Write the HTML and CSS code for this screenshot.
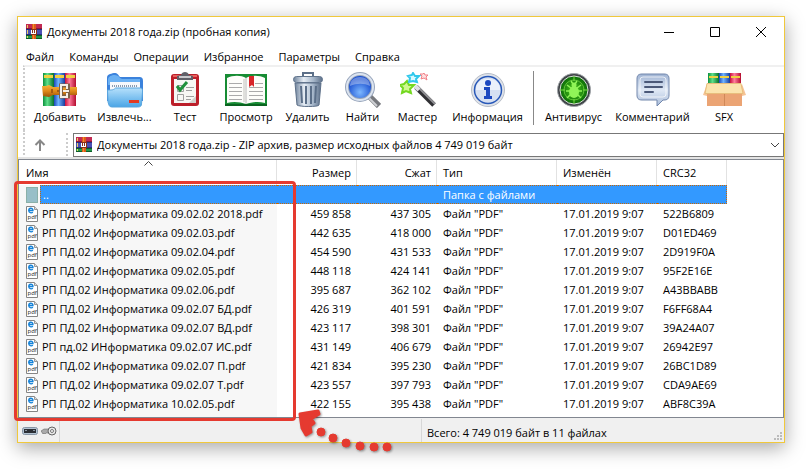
FILE: index.html
```
<!DOCTYPE html>
<html lang="ru">
<head>
  <meta charset="UTF-8">
  <meta name="viewport" content="width=device-width, initial-scale=1.0">
  <title>Документы 2018 года.zip (пробная копия)</title>
  <link rel="stylesheet" href="styles.css">
</head>
<body>

  <!-- shared icons -->
  <svg class="sprite" aria-hidden="true">
    <defs>
      <linearGradient id="g-green" x2="1" y2="0"><stop offset="0" stop-color="#0b8f3c"/><stop offset=".4" stop-color="#5fe08a"/><stop offset="1" stop-color="#08702c"/></linearGradient>
      <linearGradient id="g-blue" x2="1" y2="0"><stop offset="0" stop-color="#1c47b8"/><stop offset=".4" stop-color="#6fb4ff"/><stop offset="1" stop-color="#173c9c"/></linearGradient>
      <linearGradient id="g-red" x2="1" y2="0"><stop offset="0" stop-color="#c8103c"/><stop offset=".4" stop-color="#ff7d9d"/><stop offset="1" stop-color="#b30b2e"/></linearGradient>
      <linearGradient id="g-belt" x2="0" y2="1"><stop offset="0" stop-color="#f6b53c"/><stop offset=".5" stop-color="#e08a1a"/><stop offset="1" stop-color="#9c5208"/></linearGradient>
      <linearGradient id="g-folder" x2="0" y2="1"><stop offset="0" stop-color="#b6e0fb"/><stop offset="1" stop-color="#4aa5e6"/></linearGradient>
      <linearGradient id="g-steel" x2="1" y2="0"><stop offset="0" stop-color="#6f839c"/><stop offset=".35" stop-color="#e6edf5"/><stop offset=".7" stop-color="#a3b4c8"/><stop offset="1" stop-color="#5d7089"/></linearGradient>
      <linearGradient id="g-bubble" x2="0" y2="1"><stop offset="0" stop-color="#9fb3d3"/><stop offset=".5" stop-color="#dfe8f5"/><stop offset="1" stop-color="#a9bcd9"/></linearGradient>
      <radialGradient id="g-lens" cx=".5" cy=".7"><stop offset="0" stop-color="#7db8ff"/><stop offset="1" stop-color="#1a4fd0"/></radialGradient>
      <radialGradient id="g-virus"><stop offset="0" stop-color="#4ecb1c"/><stop offset="1" stop-color="#0a6a08"/></radialGradient>
    </defs>

    <symbol id="winrar" viewBox="0 0 16 16">
      <path fill="#c22a52" d="M0 0h16v5H0z"/><path fill="#8d1538" d="M0 4h16v1H0z"/>
      <path fill="#4a50b4" d="M0 5h16v6H0z"/><path fill="#282c80" d="M0 5h16v1H0zM0 10h16v1H0z"/>
      <path fill="#24964a" d="M0 11h16v4H0z"/><path fill="#0d5c28" d="M0 11h16v1H0zM0 14h16v1H0z"/>
      <path fill="#e8d060" d="M1 1h1v3H1zM1 6h1v4H1zM1 12h1v2H1z"/>
      <path fill="#dc5c18" d="M6 0h4v15H6z"/><path fill="#f28a30" d="M7 0h1v15H7z"/>
      <path fill="#883018" d="M5 5h6v6H5z"/>
      <path fill="#fff" d="M5 6h1v3h1V6h1v3h1V6h1v4H5z"/>
    </symbol>
  </svg>

  <svg class="hidden" aria-hidden="true">
    <symbol id="pdf" viewBox="0 0 12 16">
      <path fill="#fff" stroke="#858585" d="M.5.5h8l3 3v12H.5z"/>
      <path fill="#ddd" stroke="#999" d="M8.500.5v3h3"/>
      <path fill="none" stroke="#1482d8" stroke-width="1.300" d="M3 4.500h4C7 1.500 2.700 1.500 2.700 4.600c0 2.400 2.800 2.700 4.200 1.600"/>
      <text x="1.500" y="13" class="pdf-tag">pdf</text>
    </symbol>
  </svg>

  <main class="window">

    <header class="titlebar">
      <svg class="small-icon"><use href="#winrar"/></svg>
      <h1>Документы 2018 года.zip (пробная копия)</h1>
      <button class="win-btn" aria-label="Свернуть"><svg width="10" height="10"><path d="M0 5.500h10"/></svg></button>
      <button class="win-btn" aria-label="Развернуть"><svg width="10" height="10"><path d="M.5.5h9v9h-9z"/></svg></button>
      <button class="win-btn" aria-label="Закрыть"><svg width="10" height="10"><path d="M0 0l10 10M10 0L0 10"/></svg></button>
    </header>

    <nav class="menu">
      <button>Файл</button>
      <button>Команды</button>
      <button>Операции</button>
      <button>Избранное</button>
      <button>Параметры</button>
      <button>Справка</button>
    </nav>

    <div class="toolbar">
      <button>
        <svg viewBox="0 0 36 36">
          <path fill="url(#g-green)" d="M1 1h11v33H1z"/><path fill="url(#g-blue)" d="M12 1h11v33H12z"/><path fill="url(#g-red)" d="M23 1h11v33H23z"/>
          <path fill="#f0d040" d="M2 3h9v3H2zM13 3h9v3h-9zM24 3h9v3h-9z"/>
          <path fill="url(#g-belt)" d="M0 14h4l3-1 4 2h24v8H11l-4 2-6-1z"/>
          <path fill="#a45a10" d="M9 17h2v4H9zM15 18h2v2h-2z"/>
          <path fill="none" stroke="#7d624a" stroke-width="4" d="M19 13.500h7v11h-7z"/>
          <path fill="none" stroke="#f4f0e8" stroke-width="2" d="M25 17v-4h-6v12h6v-4M21 19h6"/>
        </svg>
        Добавить
      </button>
      <button>
        <svg viewBox="0 0 36 36">
          <path fill="#3b82dc" d="M0 6c0-4 3-4 7-5 4 0 4 2 6 4h19c3 0 4 1 4 4v20H0z"/>
          <path fill="#6ab0f2" d="M1 7c1-4 9-6 12-1l2 1h18v6H1z"/>
          <path fill="#f6f8fc" d="M3 10h30v9H3z"/>
          <path stroke="#8b9bb0" stroke-width="2" stroke-dasharray="1 1" d="M5 14h26"/>
          <path fill="url(#g-folder)" stroke="#5ba6de" d="M.5 18c5 0 6 0 8-2h25c2 0 2 2 2 4l-1 12c0 2-1 3-4 3H5c-3 0-3-2-4-5z"/>
          <path fill="#e23a22" d="M22 28h10v3H22z"/>
        </svg>
        Извлечь...
      </button>
      <button>
        <svg viewBox="0 0 36 36">
          <rect x="4" y="2" width="28" height="32" rx="3" fill="#bc1f2a"/><path fill="#e8615c" d="M6 3h24v2H6z"/>
          <path fill="#f7f7f4" d="M7 7h22v24H7z"/><path fill="#d0d0cc" d="M22 31l7-7v7z"/>
          <path fill="#606068" d="M10 8V4l4-1c1-4 7-4 8 0l4 1v4z"/><path fill="#c8c8cc" d="M12 4h12v2H12z"/>
          <path fill="none" stroke="#a0a0a0" d="M10.500 22.500h6v6h-6zM10.500 13.500h6v6h-6zM19 15.500h8M19 18.500h6M19 24.500h8M19 27.500h5"/>
          <path fill="none" stroke="#20903c" stroke-width="3" d="M10 14l3 4 7-8"/>
        </svg>
        Тест
      </button>
      <button>
        <svg class="wide" viewBox="0 0 44 36">
          <path fill="#178c34" d="M1 2h42v32H1z"/><path fill="#0a6420" d="M1 32h42v2H1z"/>
          <path fill="#fdfdfa" d="M3 6c6-3 14-3 19 0 5-3 13-3 19 0v25c-7-2-13-1-19 1-6-2-12-3-19-1z"/>
          <path stroke="#b8b8b8" d="M22 6v26"/><path stroke="#e0e0dc" stroke-width="2" d="M20 7v23"/>
          <path stroke="#aaa" d="M5 11.500h13M5 15.500h13M5 19.500h13M5 23.500h13M5 27.500h13M25 15.500h14M25 19.500h14M25 23.500h14M25 27.500h14M31 11.500h8"/>
          <path fill="#d8262a" d="M25 4h5v11l-2-2-3 2z"/>
        </svg>
        Просмотр
      </button>
      <button>
        <svg viewBox="0 0 36 36">
          <path fill="none" stroke="#5d7089" stroke-width="2" d="M13 5V1h10v4"/>
          <path fill="url(#g-steel)" stroke="#5d7089" d="M5 11h26l-2 22c0 2-20 2-22 0z"/>
          <path stroke="#5a6e88" stroke-width="2" d="M11 14l1 17M16 14v18M21 14v18M26 14l-1 17"/>
          <rect x="3.500" y="4.500" width="29" height="6" rx="3" fill="url(#g-steel)" stroke="#62758e"/>
        </svg>
        Удалить
      </button>
      <button>
        <svg viewBox="0 0 36 36">
          <path stroke="#77797e" stroke-width="6" d="M24 24l10 10"/><path stroke="#cfd1d5" stroke-width="2" d="M24 26l8 8"/>
          <circle cx="15" cy="15" r="13" fill="url(#g-lens)" stroke="#96a4ba" stroke-width="4"/>
          <circle cx="15" cy="15" r="13" fill="none" stroke="#dce4f0" stroke-width="2"/>
          <path fill="#fff" opacity=".35" d="M5 14C5 2 25 2 25 14c-6-3-13-3-20 0z"/>
        </svg>
        Найти
      </button>
      <button>
        <svg viewBox="0 0 36 36">
          <path stroke="#303034" stroke-width="5" d="M16 15l18 18"/><path stroke="#909094" stroke-width="2" d="M17 14l18 18"/><path stroke="#e0e0e4" stroke-width="4" d="M15 14l4 4"/>
          <path fill="#d0f890" stroke="#74d820" stroke-width="2" d="M7 9l2 4 5 0-4 4 1 4-5-2-4 2 1-5-3-3 4-1z"/>
          <path fill="#d8faff" stroke="#30c8ec" stroke-width="2" d="M13 1l2 3 4 0-3 3 1 3-4-1-4 1 1-4-2-2 4-1z"/>
          <path fill="#ffe0e0" stroke="#f08088" d="M24 1l1 2h3l-2 2 1 3-3-2-3 1 1-3-2-2h3z"/>
        </svg>
        Мастер
      </button>
      <button>
        <svg viewBox="0 0 36 36">
          <circle cx="18" cy="18" r="16.500" fill="#dfe3ea" stroke="#b8bec8"/>
          <circle cx="18" cy="18" r="13.500" fill="#d6e0f2" stroke="#2858b8" stroke-width="1.500"/>
          <path fill="#f4f8ff" d="M6 18C5 3 31 3 30 18z" opacity=".7"/>
          <circle cx="18" cy="11" r="3" fill="#1c48c0"/><path fill="#1c48c0" d="M14 15h6v9h2v3h-8v-3h2v-6h-2z"/>
        </svg>
        Информация
      </button>
      <span class="divider"></span>
      <button>
        <svg viewBox="0 0 36 36">
          <circle cx="18" cy="18" r="16.500" fill="#404448" stroke="#a0a4a8"/>
          <circle cx="18" cy="18" r="14" fill="url(#g-virus)" stroke="#d8dcd8"/>
          <circle cx="18" cy="18" r="10" fill="none" stroke="#86e850" opacity=".6"/>
          <path stroke="#8cf050" opacity=".8" d="M18 4v5M18 27v5M4 18h5M27 18h5"/>
          <path fill="none" stroke="#90f458" stroke-width="1.500" d="M15 9l2 3M21 9l-2 3M11 13l4 3M25 13l-4 3M10 19h16M11 26l4-4M25 26l-4-4"/>
          <circle cx="18" cy="13" r="2.500" fill="#90f458"/><ellipse cx="18" cy="20" rx="5" ry="6" fill="#90f458"/>
        </svg>
        Антивирус
      </button>
      <button>
        <svg viewBox="0 0 36 36">
          <path fill="url(#g-bubble)" stroke="#7287ac" d="M7 2h22c4 0 5 2 5 5v16c0 4-2 5-5 5h-1l-6 6v-6H7c-4 0-5-2-5-5V7c0-3 1-5 5-5z"/>
          <rect x="5" y="5" width="26" height="20" rx="3" fill="none" stroke="#fff" opacity=".7"/>
          <path stroke="#4a5878" stroke-width="2" stroke-linecap="round" d="M10 10h17M10 15h17M10 20h8"/>
        </svg>
        Комментарий
      </button>
      <button>
        <svg class="wide" viewBox="0 0 44 36">
          <path fill="url(#g-green)" d="M6 1h11v14H6z"/><path fill="url(#g-blue)" d="M17 1h11v14H17z"/><path fill="url(#g-red)" d="M28 1h11v14H28z"/>
          <path fill="#f0d040" d="M7 4h9v2H7zM18 4h9v2h-9zM29 4h9v2h-9z"/>
          <path fill="#eba474" d="M5 13h35v21H5z"/><path fill="#d08858" d="M22 20h1v14h-1z"/>
          <path fill="#f6c496" d="M5 12l-4 11 4 1zM40 12l4 11-4 1z"/>
          <path fill="#fbe4ae" stroke="#e8bd7c" d="M5 11.500h34l2 10H3z"/>
        </svg>
        SFX
      </button>
    </div>

    <div class="address">
      <button class="up" aria-label="Вверх">
        <svg width="12" height="12"><path d="M6 12V1M1.500 6L6 1.500 10.500 6"/></svg>
      </button>
      <div class="path">
        <svg class="small-icon"><use href="#winrar"/></svg>
        <select aria-label="Адрес">
          <option>Документы 2018 года.zip - ZIP архив, размер исходных файлов 4 749 019 байт</option>
        </select>
        <svg class="chevron" width="10" height="6"><path d="M1 1l4 4 4-4"/></svg>
      </div>
    </div>

    <section class="list">
      <table>
        <colgroup>
          <col class="c-name"><col class="c-size"><col class="c-size"><col class="c-type"><col class="c-date"><col class="c-crc">
        </colgroup>
        <thead>
          <tr>
            <th>Имя<svg class="sort" width="9" height="5"><path d="M.5 4.500l4-4 4 4"/></svg></th>
            <th class="num">Размер</th>
            <th class="num">Сжат</th>
            <th>Тип</th>
            <th>Изменён</th>
            <th>CRC32</th>
          </tr>
        </thead>
        <tbody>
          <tr class="selected"><td><div class="file"><i class="folder"></i><span>..</span></div></td><td></td><td></td><td>Папка с файлами</td><td></td><td></td></tr>
          <tr><td><div class="file"><svg><use href="#pdf"/></svg><span>РП ПД.02 Информатика 09.02.02 2018.pdf</span></div></td><td>459 858</td><td>437 305</td><td>Файл "PDF"</td><td>17.01.2019 9:07</td><td>522B6809</td></tr>
          <tr><td><div class="file"><svg><use href="#pdf"/></svg><span>РП ПД.02 Информатика 09.02.03.pdf</span></div></td><td>442 635</td><td>418 000</td><td>Файл "PDF"</td><td>17.01.2019 9:07</td><td>D01ED469</td></tr>
          <tr><td><div class="file"><svg><use href="#pdf"/></svg><span>РП ПД.02 Информатика 09.02.04.pdf</span></div></td><td>454 590</td><td>431 533</td><td>Файл "PDF"</td><td>17.01.2019 9:07</td><td>2D919F0A</td></tr>
          <tr><td><div class="file"><svg><use href="#pdf"/></svg><span>РП ПД.02 Информатика 09.02.05.pdf</span></div></td><td>448 118</td><td>424 141</td><td>Файл "PDF"</td><td>17.01.2019 9:07</td><td>95F2E16E</td></tr>
          <tr><td><div class="file"><svg><use href="#pdf"/></svg><span>РП ПД.02 Информатика 09.02.06.pdf</span></div></td><td>395 687</td><td>362 102</td><td>Файл "PDF"</td><td>17.01.2019 9:07</td><td>A43BBABB</td></tr>
          <tr><td><div class="file"><svg><use href="#pdf"/></svg><span>РП ПД.02 Информатика 09.02.07 БД.pdf</span></div></td><td>426 319</td><td>401 591</td><td>Файл "PDF"</td><td>17.01.2019 9:07</td><td>F6FF68A4</td></tr>
          <tr><td><div class="file"><svg><use href="#pdf"/></svg><span>РП ПД.02 Информатика 09.02.07 ВД.pdf</span></div></td><td>423 117</td><td>398 301</td><td>Файл "PDF"</td><td>17.01.2019 9:07</td><td>39A24A07</td></tr>
          <tr><td><div class="file"><svg><use href="#pdf"/></svg><span>РП пд.02 ИНформатика 09.02.07 ИС.pdf</span></div></td><td>431 149</td><td>406 679</td><td>Файл "PDF"</td><td>17.01.2019 9:07</td><td>26942E97</td></tr>
          <tr><td><div class="file"><svg><use href="#pdf"/></svg><span>РП ПД.02 Информатика 09.02.07 П.pdf</span></div></td><td>421 834</td><td>395 230</td><td>Файл "PDF"</td><td>17.01.2019 9:07</td><td>26BC1D89</td></tr>
          <tr><td><div class="file"><svg><use href="#pdf"/></svg><span>РП ПД.02 Информатика 09.02.07 Т.pdf</span></div></td><td>423 557</td><td>397 793</td><td>Файл "PDF"</td><td>17.01.2019 9:07</td><td>CDA9AE69</td></tr>
          <tr><td><div class="file"><svg><use href="#pdf"/></svg><span>РП ПД.02 Информатика 10.02.05.pdf</span></div></td><td>422 155</td><td>395 438</td><td>Файл "PDF"</td><td>17.01.2019 9:07</td><td>ABF8C39A</td></tr>
        </tbody>
      </table>

      <!-- red frame and dotted arrow over the file names -->
      <div class="mark"></div>
      <svg class="arrow" viewBox="295 408 100 48">
        <path d="M300 415l18-3 1 3-8 5 3 4-4 3 1 6-5 3-4-7z"/>
        <circle cx="321" cy="433" r="4"/><circle cx="333" cy="439" r="4"/><circle cx="346" cy="444" r="4"/>
        <circle cx="360" cy="447" r="4"/><circle cx="374" cy="448" r="4"/><circle cx="387" cy="448" r="4"/>
      </svg>
    </section>

    <footer class="status">
      <div class="status-icons">
        <svg width="16" height="10"><rect x=".5" y="1.500" width="15" height="7" rx="2" fill="#b4c4d4" stroke="#8796a6"/><path fill="#2c3036" d="M2 3h12v4H2z"/><path fill="#8a96a2" d="M3 4h2v1H3zM11 4h2v1h-2z"/></svg>
        <svg width="16" height="10"><path fill="#aaa" stroke="#555" stroke-width=".5" d="M0 5l3-2h6v4H5L4 8 3 7 2 8z"/><circle cx="11" cy="5" r="4" fill="#e8e8e8" stroke="#666"/><circle cx="11" cy="5" r="1.500" fill="#fff" stroke="#777"/></svg>
      </div>
      <div class="status-total">Всего: 4 749 019 байт в 11 файлах</div>
      <svg class="grip" width="8" height="8"><path d="M6 0h2v2H6zM3 3h2v2H3zM6 3h2v2H6zM0 6h2v2H0zM3 6h2v2H3zM6 6h2v2H6z"/></svg>
    </footer>

  </main>

</body>
</html>
```
FILE: styles.css
```
* {
  box-sizing: border-box;
}
body {
  margin: 0;
  padding: 16px 21px 26px 17px;
  background: #fff;
  color: #000;
  font: 11px/16px "Open Sans", "Noto Sans", sans-serif;
}
button, select {
  font: inherit;
  color: inherit;
  border: none;
  background: none;
  padding: 0;
}
svg {
  display: block;
  flex: none;
}
.sprite {
  position: absolute;
  width: 0;
  height: 0;
}
.hidden {
  display: none;
}
.pdf-tag {
  font: 6px "Open Sans", sans-serif;
  fill: #222;
}
.small-icon {
  width: 16px;
  height: 16px;
}

.window {
  border: 1px solid #f0c83c;
  background: #fff;
  box-shadow: 0 5px 18px rgba(0, 0, 0, 0.35);
}

/* title and menu */
.titlebar {
  display: flex;
  align-items: center;
  height: 29px;
  padding-left: 8px;
}
.titlebar h1 {
  flex: 1;
  margin: 0 0 0 5px;
  font-size: 11px;
  font-weight: normal;
}
.win-btn {
  width: 46px;
  height: 28px;
  display: flex;
  align-items: center;
  justify-content: center;
}
.win-btn path {
  fill: none;
  stroke: #000;
}
.menu {
  display: flex;
  gap: 15px;
  height: 19px;
  padding: 2px 0 0 8px;
}

/* toolbar */
.toolbar {
  display: grid;
  grid-template-columns: 62px 67px 54px 68px 55px 55px 55px 85px 9px 69px 89px 54px;
  padding: 4px 0 4px 4px;
  margin-left: 5px;
  border-top: 2px solid #f0f0f0;
  border-left: 2px dotted #ccc;
}
.toolbar button {
  display: flex;
  flex-direction: column;
  align-items: center;
  white-space: nowrap;
  height: 55px;
}
.toolbar svg {
  width: 36px;
  height: 36px;
  margin: 1px 0;
}
.toolbar svg.wide {
  width: 44px;
}
.divider {
  width: 1px;
  height: 54px;
  margin-left: 3px;
  background: #888;
}

/* address row */
.address {
  display: flex;
  align-items: center;
  height: 29px;
  margin-left: 5px;
  border-left: 2px dotted #ccc;
}
.up {
  width: 43px;
  height: 23px;
  display: flex;
  align-items: center;
  padding-left: 9px;
  border-right: 2px dotted #ccc;
}
.up path {
  fill: none;
  stroke: #888;
  stroke-width: 2;
}
.path {
  flex: 1;
  display: flex;
  align-items: center;
  height: 24px;
  margin-left: 5px;
  padding: 0 3px 0 2px;
  border: 1px solid #777;
}
.path select {
  flex: 1;
  appearance: none;
  margin-left: 5px;
}
.chevron path, .sort path {
  fill: none;
  stroke: #444;
}

/* file list */
.list {
  position: relative;
  border: 1px solid #828790;
  box-shadow: 0 -2px 0 #e4e4e4;
}
table {
  width: 708px;
  table-layout: fixed;
  border-collapse: separate;
  border-spacing: 0;
}
.c-name { width: 258px; }
.c-size { width: 80px; }
.c-type { width: 120px; }
.c-date { width: 100px; }
.c-crc { width: 70px; }
th {
  position: relative;
  height: 25px;
  padding: 0 5px 0 6px;
  border-right: 1px solid #e2e2e2;
  font-weight: normal;
  text-align: left;
}
th:first-child {
  padding-left: 7px;
}
th.num {
  text-align: right;
}
.sort {
  position: absolute;
  top: 1px;
  left: calc(50% - 4px);
}
td {
  height: 19px;
  padding: 0 0 0 6px;
  line-height: 17px;
  white-space: nowrap;
}
td:first-child {
  padding-left: 7px;
  background: #f7f7f7;
}
td:nth-child(2), td:nth-child(3) {
  padding: 0 6px 0 0;
  text-align: right;
}
tbody tr:last-child td {
  height: 23px;
  padding-bottom: 4px;
}
.file {
  display: flex;
  align-items: center;
  height: 19px;
}
.file svg, .folder {
  width: 12px;
  height: 16px;
}
.folder {
  background: #98bfc8;
  border: 1px solid #8ab0a8;
}
.file span {
  flex: 1;
  margin-left: 2px;
  padding-left: 2px;
}
.selected td:not(:first-child), .selected span {
  height: 19px;
  background: #3399ff;
  color: #fff;
  border-top: 1px dotted #cc6600;
  border-bottom: 1px dotted #cc6600;
}
.selected span {
  border-left: 1px dotted #cc6600;
}
.selected td:last-child {
  border-right: 1px dotted #cc6600;
}

/* annotation */
.mark {
  position: absolute;
  top: 21px;
  left: -5px;
  bottom: -4px;
  width: 282px;
  border: 3px solid #e53a30;
  border-radius: 4px;
}
.arrow {
  position: absolute;
  left: 276px;
  bottom: -38px;
  width: 100px;
  height: 48px;
  fill: #e53a30;
  stroke: #e53a30;
  stroke-linejoin: round;
  filter: drop-shadow(1px 1px 1px rgba(0, 0, 0, 0.4));
}
.arrow path {
  stroke-width: 3;
}

/* status bar */
.status {
  display: flex;
  height: 24px;
  padding-top: 1px;
  background: #f0f0f0;
}
.status-icons {
  display: flex;
  align-items: center;
  gap: 3px;
  width: 42px;
  padding-left: 4px;
  border-right: 1px solid #d7d7d7;
}
.status-total {
  flex: 1;
  margin-left: 361px;
  padding: 2px 0 0 5px;
  border-left: 1px solid #d7d7d7;
  line-height: 24px;
}
.grip {
  align-self: flex-end;
  margin: 2px;
  fill: #bbb;
}
```
